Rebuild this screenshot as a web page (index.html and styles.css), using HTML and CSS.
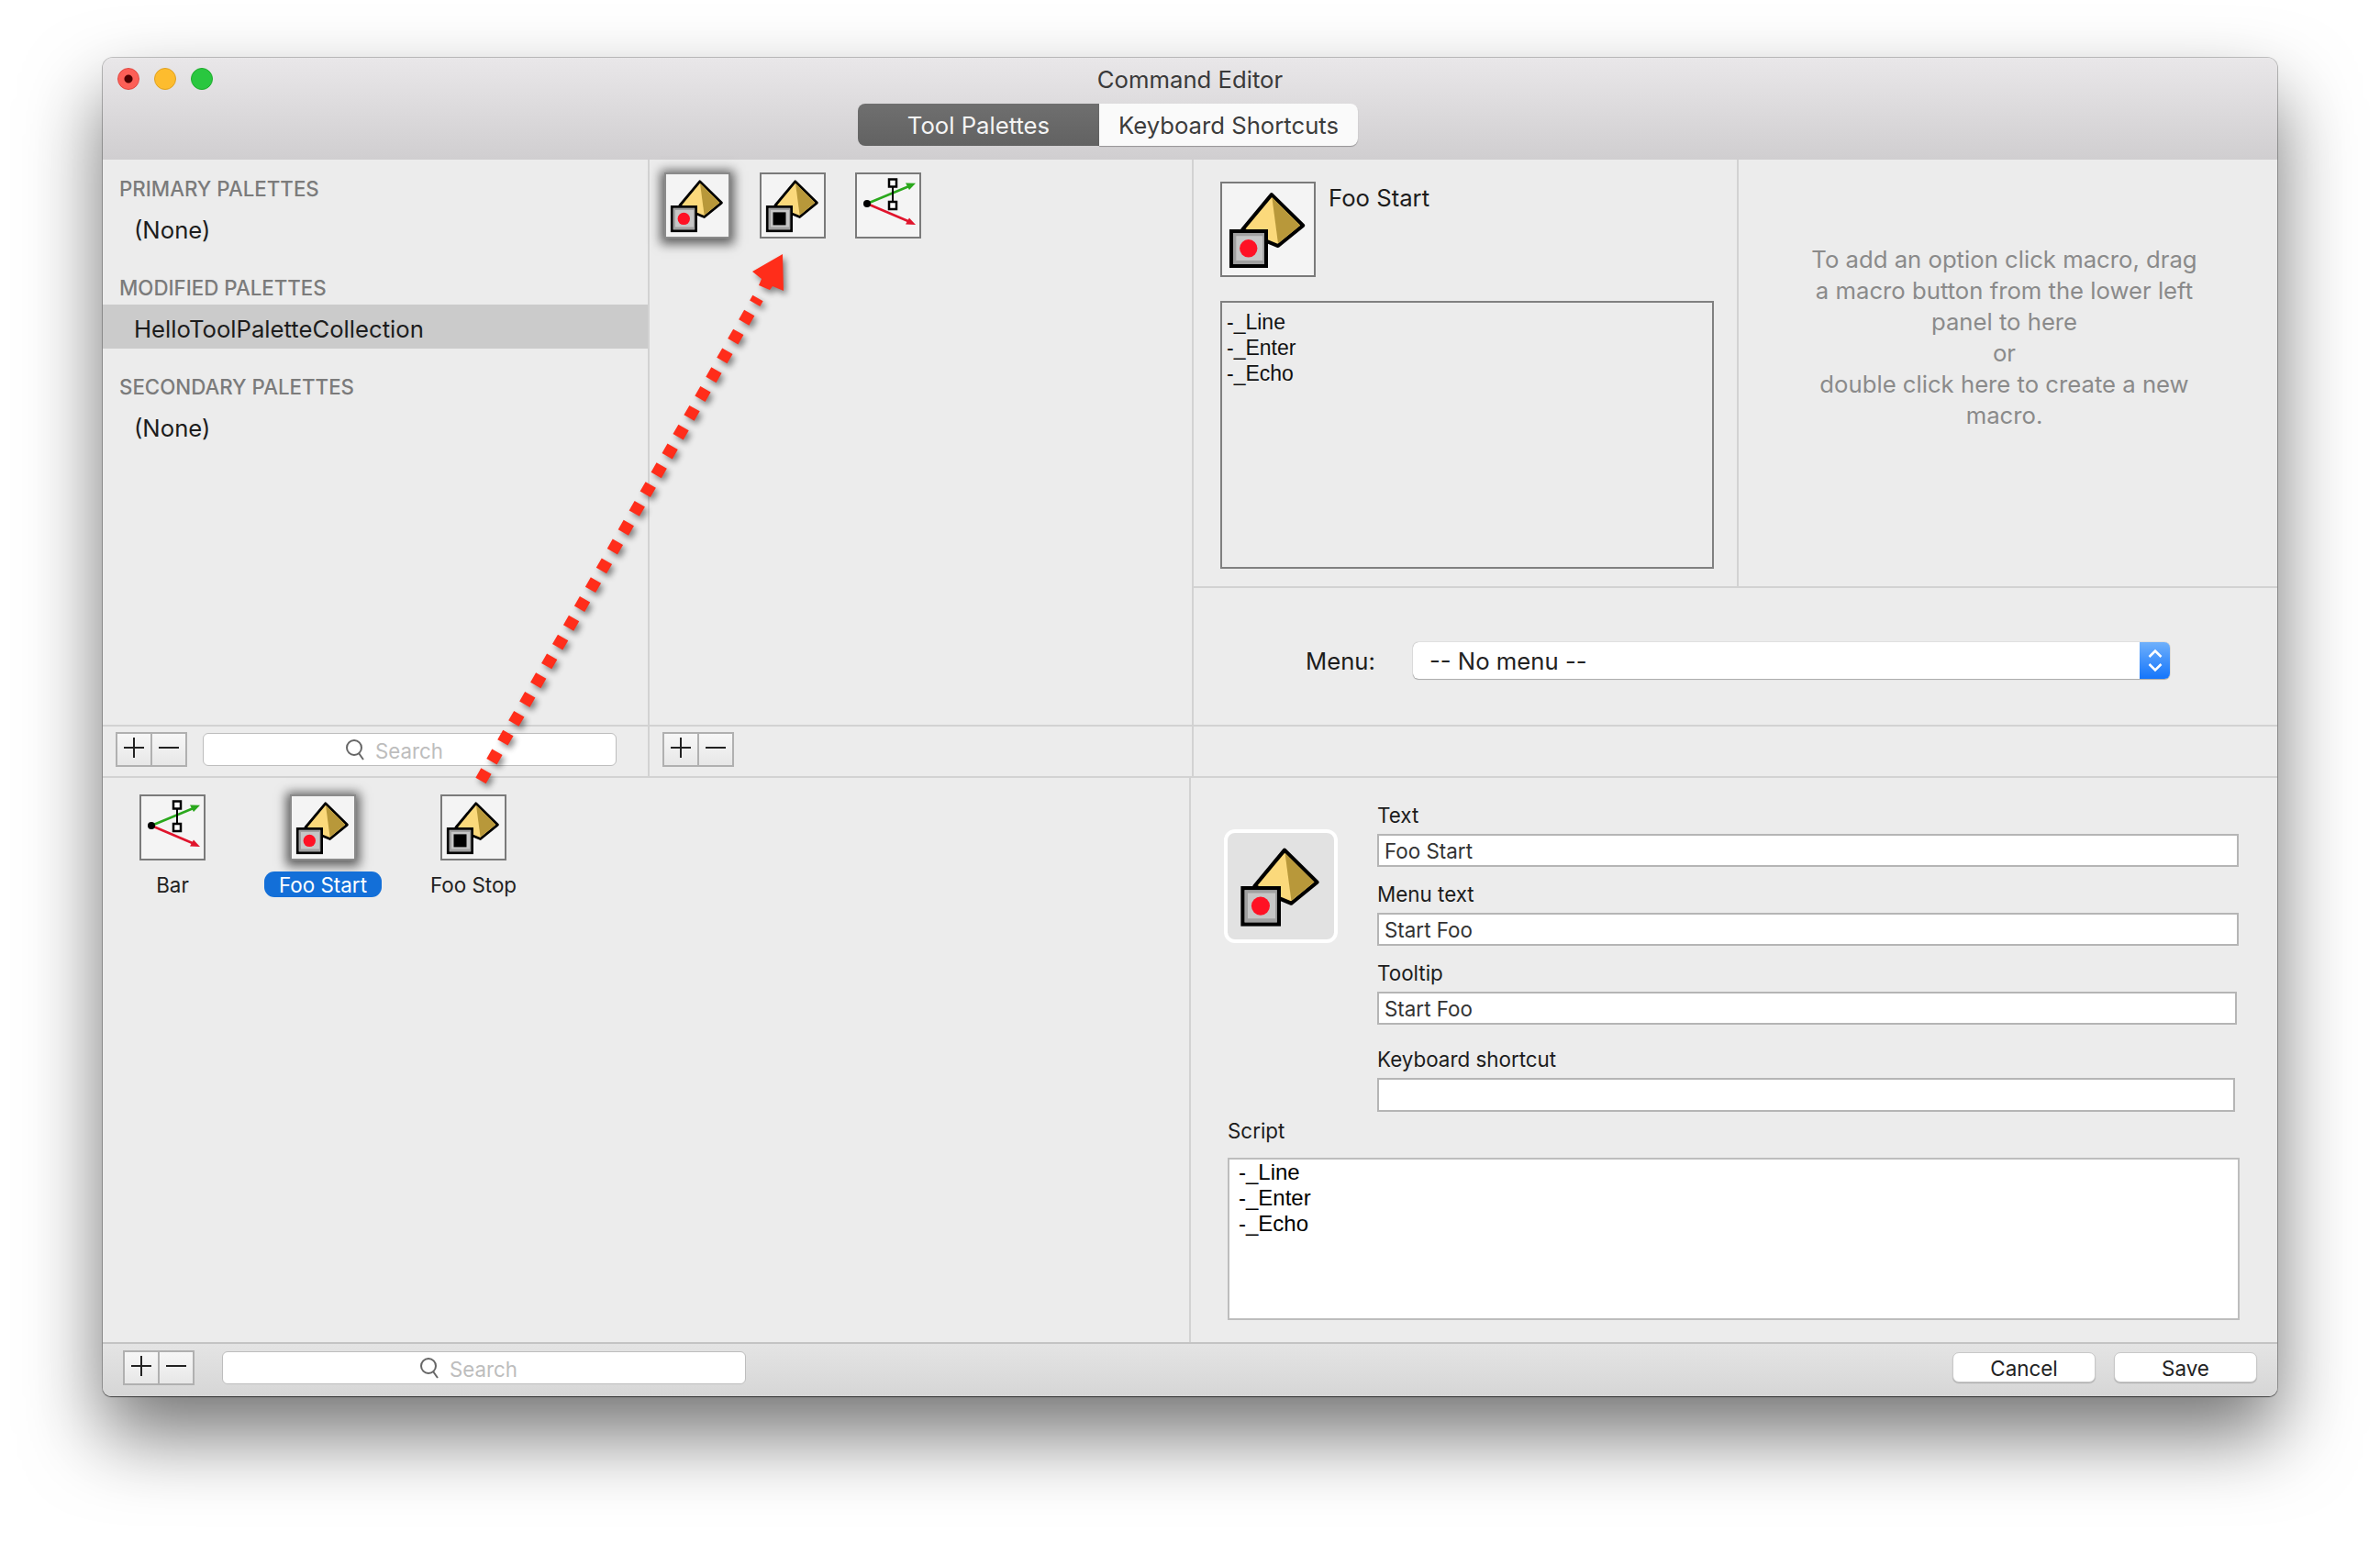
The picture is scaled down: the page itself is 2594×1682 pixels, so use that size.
FILE: index.html
```html
<!DOCTYPE html>
<html lang="en">
<head>
<meta charset="UTF-8" />
<title>Command Editor</title>
<link rel="stylesheet" href="styles.css">
</head>
<body>
  <svg class="defs" width="0" height="0">
    <symbol id="pyramid" viewBox="0 0 72 72">
      <path d="M38.700 9.800 L62.400 33.100 L43.600 48.500 L34 44.500 L16.900 36 Z" fill="#fbd97b" stroke="#000" stroke-width="2.800" stroke-linejoin="round"/>
      <path d="M39 11.800 L60.300 33 L43.600 46.500 Z" fill="#b8983a"/>
      <rect x="8.300" y="37.400" width="26.300" height="26.300" fill="#8c8c8c" stroke="#000" stroke-width="2.800"/>
      <rect x="9.700" y="38.800" width="23.500" height="23.500" fill="#a0a0a0"/>
      <rect x="12" y="41" width="20" height="18.500" fill="#c6c6c6"/>
    </symbol>
    <symbol id="icon-start" viewBox="0 0 72 72">
      <use href="#pyramid"/>
      <circle cx="21.300" cy="50.400" r="6.700" fill="#ff1124"/>
    </symbol>
    <symbol id="icon-stop" viewBox="0 0 72 72">
      <use href="#pyramid"/>
      <rect x="14.500" y="43.400" width="14" height="14" fill="#000"/>
    </symbol>
    <symbol id="icon-bar" viewBox="0 0 72 72">
      <path d="M13 34 L60 14.500" stroke="#2aa81c" stroke-width="2.500"/>
      <path d="M66 11.800 L55 11.500 L59 19 Z" fill="#2aa81c"/>
      <path d="M13 34 L60 54" stroke="#e0142c" stroke-width="2.500"/>
      <path d="M66 57 L55 56.500 L59 49.500 Z" fill="#e0142c"/>
      <path d="M41 15 L41 32" stroke="#000" stroke-width="2"/>
      <rect x="37" y="7.500" width="8" height="8" fill="#fff" stroke="#000" stroke-width="2.500"/>
      <rect x="37" y="32" width="8" height="8" fill="#fff" stroke="#000" stroke-width="2.500"/>
      <circle cx="13" cy="34" r="4" fill="#000"/>
    </symbol>
    <symbol id="search" viewBox="0 0 22 24">
      <circle cx="10" cy="10" r="8" fill="none" stroke="#666" stroke-width="2"/>
      <path d="M15 16 L20 23" stroke="#666" stroke-width="2"/>
    </symbol>
  </svg>

  <div class="window">
    <header class="titlebar">
      <div class="title-row">
        <div class="lights">
          <span class="light red"></span>
          <span class="light yellow"></span>
          <span class="light green"></span>
        </div>
        <div class="title">Command Editor</div>
      </div>
      <div class="tabs">
        <div class="tab active">Tool Palettes</div>
        <div class="tab">Keyboard Shortcuts</div>
      </div>
    </header>

    <div class="upper">
      <div class="palettes">
        <div class="pal-head">PRIMARY PALETTES</div>
        <div class="pal-item">(None)</div>
        <div class="pal-head gap">MODIFIED PALETTES</div>
        <div class="pal-item selected">HelloToolPaletteCollection</div>
        <div class="pal-head gap">SECONDARY PALETTES</div>
        <div class="pal-item">(None)</div>
      </div>

      <div class="buttons-pane">
        <div class="icon-box selected"><svg class="glyph"><use href="#icon-start"/></svg></div>
        <div class="icon-box"><svg class="glyph"><use href="#icon-stop"/></svg></div>
        <div class="icon-box"><svg class="glyph"><use href="#icon-bar"/></svg></div>
      </div>

      <div class="detail">
        <div class="detail-top">
          <div class="preview">
            <div class="preview-head">
              <div class="icon-box large"><svg class="glyph"><use href="#icon-start"/></svg></div>
              <div class="preview-name">Foo Start</div>
            </div>
            <div class="preview-script">-_Line<br>-_Enter<br>-_Echo</div>
          </div>
          <div class="hint">To add an option click macro, drag<br>a macro button from the lower left<br>panel to here<br>or<br>double click here to create a new<br>macro.</div>
        </div>
        <div class="menu-row">
          <div class="menu-label">Menu:</div>
          <div class="select">
            <div class="select-text">-- No menu --</div>
            <div class="select-arrows">
              <svg width="16" height="26" viewBox="0 0 16 26">
                <path d="M1.500 9 L8 2.500 L14.500 9 M1.500 17 L8 23.500 L14.500 17" fill="none" stroke="#fff" stroke-width="2.500"/>
              </svg>
            </div>
          </div>
        </div>
      </div>
    </div>

    <div class="toolbar">
      <div class="toolbar-cell first">
        <div class="plus-minus">
          <div class="pm plus"></div>
          <div class="pm minus"></div>
        </div>
        <div class="search short">
          <svg class="search-icon"><use href="#search"/></svg>
          <span>Search</span>
        </div>
      </div>
      <div class="toolbar-cell second">
        <div class="plus-minus">
          <div class="pm plus"></div>
          <div class="pm minus"></div>
        </div>
      </div>
      <div class="toolbar-cell"></div>
    </div>

    <div class="lower">
      <div class="macros">
        <div class="macro">
          <div class="icon-box"><svg class="glyph"><use href="#icon-bar"/></svg></div>
          <div class="macro-label">Bar</div>
        </div>
        <div class="macro">
          <div class="icon-box selected"><svg class="glyph"><use href="#icon-start"/></svg></div>
          <div class="macro-label on">Foo Start</div>
        </div>
        <div class="macro">
          <div class="icon-box"><svg class="glyph"><use href="#icon-stop"/></svg></div>
          <div class="macro-label">Foo Stop</div>
        </div>
      </div>

      <div class="form">
        <div class="form-top">
          <div class="well"><svg class="well-glyph"><use href="#icon-start"/></svg></div>
          <div class="fields">
            <div class="field-label">Text</div>
            <div class="field">Foo Start</div>
            <div class="field-label">Menu text</div>
            <div class="field">Start Foo</div>
            <div class="field-label">Tooltip</div>
            <div class="field tooltip">Start Foo</div>
            <div class="field-label shortcut">Keyboard shortcut</div>
            <div class="field shortcut-box"></div>
          </div>
        </div>
        <div class="field-label script-label">Script</div>
        <div class="script">-_Line<br>-_Enter<br>-_Echo</div>
      </div>
    </div>

    <footer class="bottom">
      <div class="plus-minus">
        <div class="pm plus"></div>
        <div class="pm minus"></div>
      </div>
      <div class="search long">
        <svg class="search-icon"><use href="#search"/></svg>
        <span>Search</span>
      </div>
      <div class="actions">
        <div class="action">Cancel</div>
        <div class="action">Save</div>
      </div>
    </footer>

    <svg class="drag-arrow" viewBox="112 63 2370 1459">
      <line x1="524" y1="851" x2="826" y2="325" stroke="#ff2d1a" stroke-width="13" stroke-dasharray="12 12"/>
      <path d="M853 277 L820 296 L830 304 L827 311 L839 316 L842 312 L854 317 Z" fill="#ff2d1a"/>
    </svg>
  </div>
</body>
</html>
```

FILE: styles.css
```css
* {
  box-sizing: border-box;
}
body {
  background-color: #fff;
  color: #222;
  font-family: 'Inter', 'Noto Sans', sans-serif;
  font-size: 25.7px;
  margin: 0;
  height: 1682px;
  overflow: hidden;
}
.defs {
  position: absolute;
}
.window {
  position: relative;
  width: 2370px;
  height: 1459px;
  margin: 63px 0 0 112px;
  background-color: #ececec;
  border-radius: 11px 11px 9px 9px;
  box-shadow: 0 0 0 1px rgba(0, 0, 0, 0.22), 0 1px 1px rgba(0, 0, 0, 0.5), 0 42px 84px rgba(0, 0, 0, 0.55);
  display: flex;
  flex-direction: column;
}

/* title bar */
.titlebar {
  height: 111px;
  flex: none;
  background: linear-gradient(#e9e7e9, #d0ced0);
  border-radius: 11px 11px 0 0;
}
.title-row {
  height: 50px;
  padding: 11px 16px 0;
  display: grid;
  grid-template-columns: 1fr auto 1fr;
  align-items: start;
}
.lights {
  display: flex;
  gap: 16px;
}
.light {
  width: 24px;
  height: 24px;
  border-radius: 50%;
}
.red {
  background: radial-gradient(circle, #4d0000 0 4px, #fc5f57 5px);
  border: 1px solid #e2463f;
}
.yellow {
  background-color: #fdbc2e;
  border: 1px solid #dfa123;
}
.green {
  background-color: #29c73f;
  border: 1px solid #1fac2d;
}
.title {
  grid-column: 2;
  line-height: 25px;
  color: #3a3a3a;
}
.tabs {
  display: flex;
  margin-left: 823px;
  height: 46px;
}
.tab {
  width: 282px;
  background-color: #fafafa;
  border-radius: 0 8px 8px 0;
  box-shadow: 0 1px 1px rgba(0, 0, 0, 0.3);
  text-align: center;
  line-height: 48px;
  color: #3c3c3c;
}
.tab.active {
  width: 263px;
  background: linear-gradient(#6f6f6f, #626262);
  border-radius: 8px 0 0 8px;
  box-shadow: none;
  color: #f4f4f4;
}

/* upper panes */
.upper {
  height: 616px;
  flex: none;
  display: flex;
}
.palettes {
  width: 596px;
  flex: none;
  border-right: 2px solid #d2d2d2;
  padding-top: 18px;
}
.pal-head {
  height: 28px;
  line-height: 28px;
  margin: 0 0 4px 18px;
  font-size: 22.3px;
  font-weight: 500;
  color: #7b7b7b;
}
.pal-head.gap {
  margin-top: 28px;
}
.pal-item {
  height: 48px;
  line-height: 54px;
  padding-left: 34px;
  color: #1c1c1c;
}
.pal-item.selected {
  background-color: #cbcbcb;
}
.buttons-pane {
  width: 593px;
  flex: none;
  border-right: 2px solid #d2d2d2;
  padding: 14px 0 0 16px;
  display: flex;
  align-items: flex-start;
  gap: 32px;
}
.icon-box {
  width: 72px;
  height: 72px;
  flex: none;
  background-color: #f4f4f4;
  border: 2px solid #7a7a7a;
}
.icon-box.selected {
  border-color: #8a8a8a;
  box-shadow: 0 2px 11px 4px rgba(0, 0, 0, 0.6);
}
.icon-box.large {
  width: 104px;
  height: 104px;
}
.glyph {
  display: block;
  margin: -2px;
  overflow: visible;
}
.icon-box .glyph {
  width: 72px;
  height: 72px;
}
.icon-box.large .glyph {
  width: 104px;
  height: 104px;
}

/* macro detail */
.detail {
  flex: 1;
  display: flex;
  flex-direction: column;
}
.detail-top {
  height: 467px;
  flex: none;
  display: flex;
  border-bottom: 2px solid #d2d2d2;
}
.preview {
  width: 594px;
  flex: none;
  border-right: 2px solid #d2d2d2;
  padding: 24px 0 0 29px;
}
.preview-head {
  display: flex;
  gap: 14px;
}
.preview-name {
  line-height: 36px;
  color: #1c1c1c;
}
.preview-script {
  width: 538px;
  height: 292px;
  margin-top: 26px;
  padding: 7px 0 0 5px;
  border: 2px solid #808080;
  font-family: 'Liberation Sans', sans-serif;
  font-size: 23px;
  line-height: 28px;
  color: #111;
}
.hint {
  flex: 1;
  padding: 92px 8px 0 0;
  text-align: center;
  line-height: 34px;
  color: #8a8a8a;
}
.menu-row {
  flex: 1;
  display: flex;
  padding: 59px 0 0 122px;
}
.menu-label {
  width: 117px;
  line-height: 42px;
  color: #1c1c1c;
}
.select {
  width: 825px;
  height: 40px;
  display: flex;
  background-color: #fff;
  border-radius: 6px;
  box-shadow: 0 0 1px rgba(0, 0, 0, 0.5), 0 1px 1px rgba(0, 0, 0, 0.25);
}
.select-text {
  flex: 1;
  padding-left: 18px;
  line-height: 42px;
  color: #222;
}
.select-arrows {
  width: 33px;
  display: flex;
  align-items: center;
  justify-content: center;
  background: linear-gradient(#6fb0fb, #1475fb);
  border-radius: 0 6px 6px 0;
}

/* toolbar under the upper panes */
.toolbar {
  height: 58px;
  flex: none;
  display: flex;
  border-top: 2px solid #d2d2d2;
  border-bottom: 2px solid #d2d2d2;
}
.toolbar-cell {
  padding: 6px 0 0 14px;
  display: flex;
  align-items: flex-start;
  border-right: 2px solid #d2d2d2;
}
.toolbar-cell.first {
  width: 596px;
}
.toolbar-cell.second {
  width: 593px;
}
.toolbar-cell:last-child {
  flex: 1;
  border-right: none;
}
.plus-minus {
  width: 78px;
  height: 38px;
  flex: none;
  display: flex;
  border: 2px solid #b0b0b0;
}
.pm {
  flex: 1;
  background: linear-gradient(#f7f7f7, #e7e7e7);
  position: relative;
}
.pm.plus {
  border-right: 2px solid #b0b0b0;
}
.pm::before {
  content: "";
  position: absolute;
  left: 50%;
  top: 50%;
  width: 22px;
  height: 2px;
  margin: -3px 0 0 -11px;
  background-color: #222;
}
.pm.plus::after {
  content: "";
  position: absolute;
  left: 50%;
  top: 50%;
  width: 2px;
  height: 22px;
  margin: -13px 0 0 -1px;
  background-color: #222;
}
.search {
  height: 36px;
  flex: none;
  margin-top: 1px;
  padding-right: 34px;
  display: flex;
  align-items: center;
  justify-content: center;
  gap: 11px;
  background-color: #fff;
  border: 1px solid #bdbdbd;
  border-radius: 6px;
  font-size: 22.3px;
  color: #bdbdbd;
}
.search span {
  padding-top: 2px;
}
.search.short {
  width: 451px;
  margin-left: 17px;
}
.search.long {
  width: 571px;
  margin-left: 30px;
}
.search-icon {
  width: 22px;
  height: 24px;
}

/* lower panes */
.lower {
  height: 615px;
  flex: none;
  display: flex;
}
.macros {
  width: 1186px;
  flex: none;
  border-right: 2px solid #d2d2d2;
  padding: 18px 0 0 4px;
  display: flex;
  align-items: flex-start;
  gap: 20px;
}
.macro {
  width: 144px;
  display: flex;
  flex-direction: column;
  align-items: center;
}
.macro-label {
  margin-top: 12px;
  height: 28px;
  padding: 0 16px;
  line-height: 30px;
  font-size: 22.4px;
  color: #222;
  white-space: nowrap;
}
.macro-label.on {
  background-color: #136fd8;
  border-radius: 11px;
  color: #fff;
}
.form {
  flex: 1;
  padding: 26px 0 0 40px;
}
.form-top {
  display: flex;
  gap: 43px;
}
.well {
  width: 124px;
  height: 124px;
  flex: none;
  margin: 30px 0 0 -4px;
  padding: 4px;
  background-color: #e2e2e2;
  border: 4px solid #fff;
  border-radius: 12px;
}
.well-glyph {
  display: block;
  width: 108px;
  height: 108px;
}
.fields {
  width: 939px;
}
.field-label {
  height: 28px;
  line-height: 30px;
  margin-bottom: 7px;
  font-size: 22.4px;
  color: #1c1c1c;
}
.field {
  height: 36px;
  margin-bottom: 15px;
  padding-left: 6px;
  background-color: #fff;
  border: 2px solid #b5b5b5;
  font-size: 22.4px;
  line-height: 34px;
  color: #333;
}
.field.tooltip {
  width: 937px;
}
.field-label.shortcut {
  margin-top: 23px;
}
.field.shortcut-box {
  width: 935px;
  height: 37px;
  margin-bottom: 6px;
}
.script-label {
  margin-bottom: 16px;
}
.script {
  width: 1103px;
  height: 177px;
  padding-left: 10px;
  background-color: #fff;
  border: 2px solid #bdbdbd;
  font-family: 'Liberation Sans', sans-serif;
  font-size: 24px;
  line-height: 28px;
  color: #000;
}

/* bottom bar */
.bottom {
  flex: 1;
  display: flex;
  align-items: flex-start;
  padding: 7px 22px 0;
  background: linear-gradient(#e4e4e4, #d6d6d6);
  border-top: 2px solid #c4c4c4;
  border-radius: 0 0 9px 9px;
}
.actions {
  margin-left: auto;
  display: flex;
  gap: 20px;
}
.action {
  width: 156px;
  height: 33px;
  margin-top: 2px;
  background-color: #fff;
  border: 1px solid #c8c8c8;
  border-radius: 7px;
  box-shadow: 0 1px 1px rgba(0, 0, 0, 0.2);
  text-align: center;
  font-size: 22.4px;
  line-height: 33px;
  color: #222;
}

/* hand drawn arrow on top of the whole window */
.drag-arrow {
  position: absolute;
  left: 0;
  top: 0;
  width: 2370px;
  height: 1459px;
  pointer-events: none;
  filter: drop-shadow(3px 4px 3px rgba(0, 0, 0, 0.45));
}
```
